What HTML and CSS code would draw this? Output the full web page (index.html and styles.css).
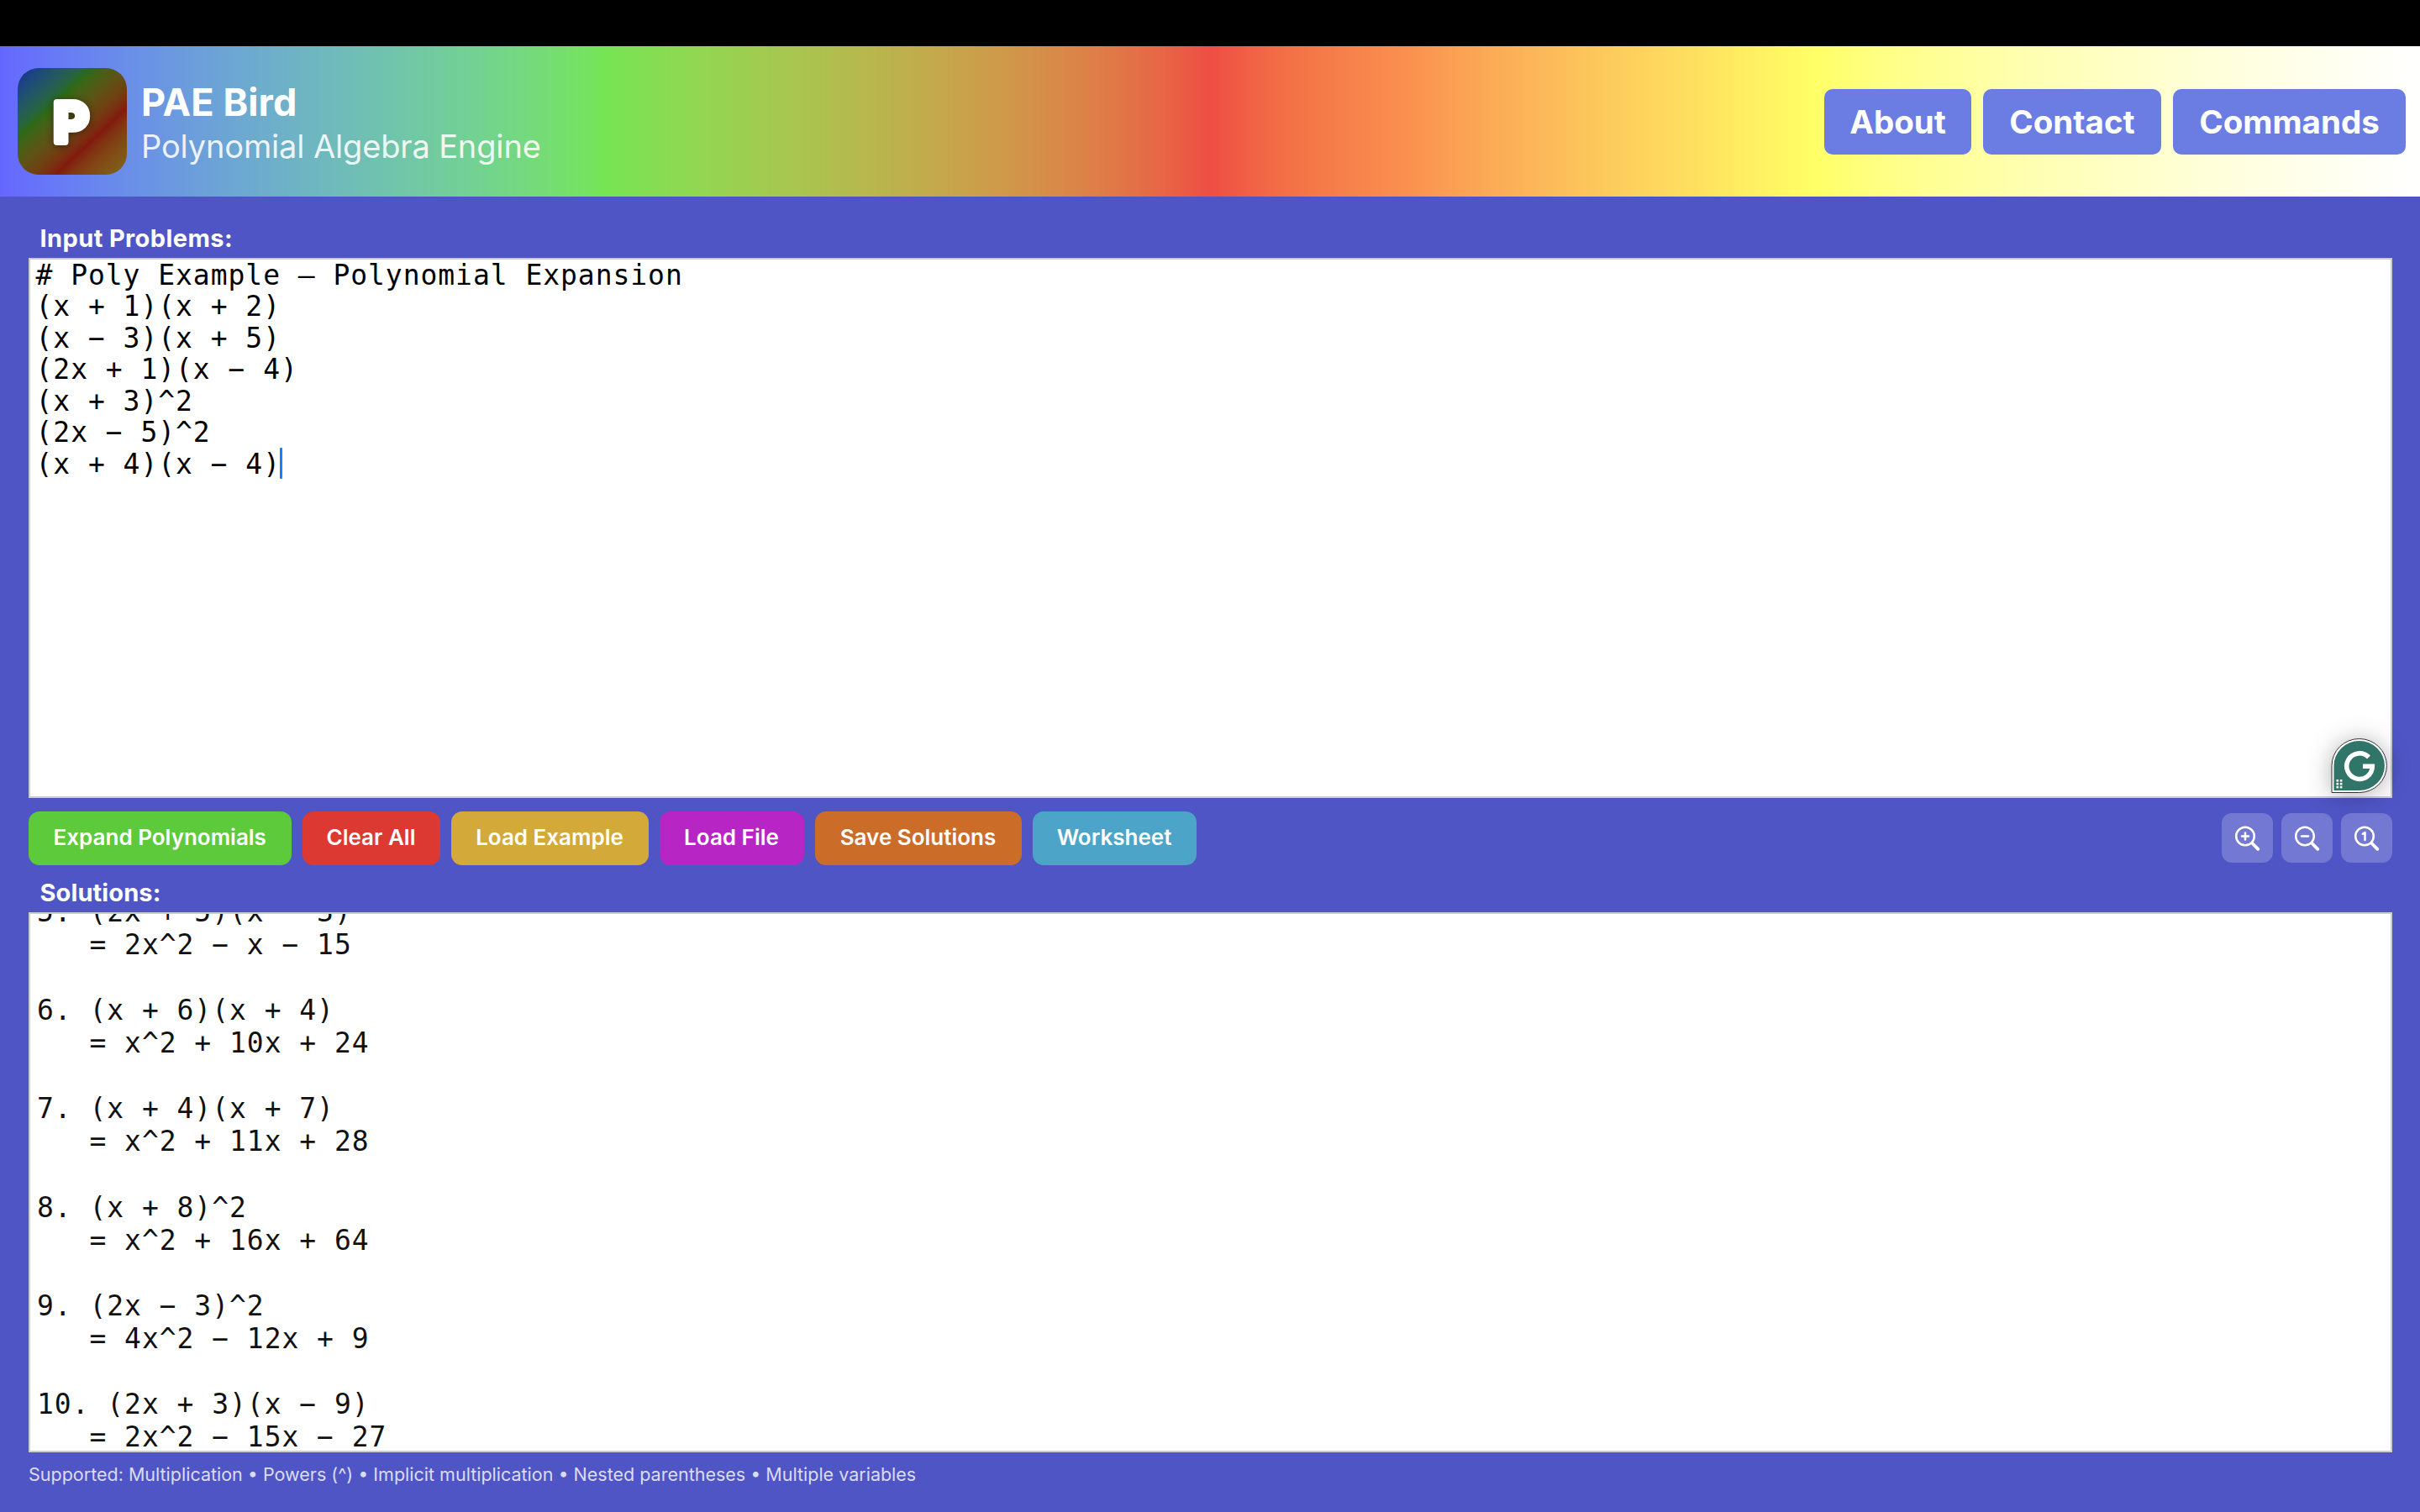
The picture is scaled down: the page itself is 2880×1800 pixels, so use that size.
FILE: index.html
```html
<!DOCTYPE html>
<html lang="en">
<head>
<meta charset="utf-8">
<title>PAE Bird</title>
<link rel="stylesheet" href="styles.css">
</head>
<body>
<div class="notch"></div>
<header class="header">
  <div class="logo"><svg width="130" height="127" viewBox="0 0 130 127"><text class="logo-letter" x="42.500" y="88.200">P</text></svg></div>
  <div class="brand">
    <h1 class="title">PAE Bird</h1>
    <p class="subtitle">Polynomial Algebra Engine</p>
  </div>
  <nav class="nav">
    <a class="nav-btn nav-about">About</a>
    <a class="nav-btn nav-contact">Contact</a>
    <a class="nav-btn nav-commands">Commands</a>
  </nav>
</header>
<main class="main">
  <h2 class="label label-input">Input Problems:</h2>
  <section class="pane pane-input">
<pre class="code code-input"># Poly Example — Polynomial Expansion
(x + 1)(x + 2)
(x − 3)(x + 5)
(2x + 1)(x − 4)
(x + 3)^2
(2x − 5)^2
(x + 4)(x − 4)<i class="caret"></i></pre>
    <svg class="badge" width="160" height="150" viewBox="0 0 160 150">
      <path class="badge-rim" d="M55 104.500V72.500A32.700 32 0 1 1 87.700 104.500Z"/>
      <path class="badge-fill" d="M57.500 102V72.500A30.200 29.500 0 1 1 87.700 102Z"/>
      <path class="badge-g" d="M99 62.500A15.300 15.300 0 1 0 103.300 73.200H92"/>
      <g fill="#fff"><rect x="60.500" y="89" width="2.600" height="2.600"/><rect x="64.800" y="89" width="2.600" height="2.600"/><rect x="60.500" y="92.900" width="2.600" height="2.600"/><rect x="64.800" y="92.900" width="2.600" height="2.600"/><rect x="60.500" y="96.800" width="2.600" height="2.600"/><rect x="64.800" y="96.800" width="2.600" height="2.600"/></g>
    </svg>
  </section>
  <div class="toolbar">
    <button class="btn btn-expand">Expand Polynomials</button>
    <button class="btn btn-clear">Clear All</button>
    <button class="btn btn-example">Load Example</button>
    <button class="btn btn-file">Load File</button>
    <button class="btn btn-save">Save Solutions</button>
    <button class="btn btn-sheet">Worksheet</button>
    <div class="zooms">
      <button class="zoom-btn"><svg width="61" height="59" viewBox="0 0 61 59"><circle cx="28" cy="27.500" r="10.800"/><path d="M28 23.500v8M24 27.500h8"/><path class="handle" d="M36.500 36L43.300 42.800"/></svg></button>
      <button class="zoom-btn"><svg width="61" height="59" viewBox="0 0 61 59"><circle cx="28" cy="27.500" r="10.800"/><path d="M24 27.500h8"/><path class="handle" d="M36.500 36L43.300 42.800"/></svg></button>
      <button class="zoom-btn"><svg width="61" height="59" viewBox="0 0 61 59"><circle cx="28" cy="27.500" r="10.800"/><path d="M25.800 24.800L28.500 23V32"/><path class="handle" d="M36.500 36L43.300 42.800"/></svg></button>
    </div>
  </div>
  <h2 class="label label-solutions">Solutions:</h2>
  <section class="pane pane-solutions">
<pre class="code code-solutions">5. (2x + 5)(x − 3)
   = 2x^2 − x − 15

6. (x + 6)(x + 4)
   = x^2 + 10x + 24

7. (x + 4)(x + 7)
   = x^2 + 11x + 28

8. (x + 8)^2
   = x^2 + 16x + 64

9. (2x − 3)^2
   = 4x^2 − 12x + 9

10. (2x + 3)(x − 9)
   = 2x^2 − 15x − 27</pre>
  </section>
  <p class="footer">Supported: Multiplication • Powers (^) • Implicit multiplication • Nested parentheses • Multiple variables</p>
</main>
</body>
</html>
```
FILE: styles.css
```css
* { box-sizing: border-box; margin: 0; padding: 0; }
body {
  width: 2880px; height: 1800px; overflow: hidden;
  display: flex; flex-direction: column;
  background: #4f55c5; color: #fff;
  font-family: Inter, "Liberation Sans", sans-serif;
}
.notch { height: 55px; background: #000; }
.header {
  height: 179px; padding: 0 17px 0 21px;
  display: flex; align-items: center;
  background: linear-gradient(90deg in srgb-linear, #6666ff 0%, #76e554 25%, #ee4d44 50%, #f37347 53.6%, #fa8f4f 58%, #fcba5a 64%, #fee05f 70%, #ffff66 75%, #ffffff 100%);
}
.logo {
  width: 130px; height: 127px; border-radius: 25px; overflow: hidden;
  background: linear-gradient(137deg in srgb-linear, #142a96 0%, #2a6a18 33%, #82190f 68%, #80661c 100%);
}
.logo svg { display: block; }
.logo-letter {
  font-size: 65px; font-weight: 700; fill: #fff;
  stroke: #fff; stroke-width: 8px; stroke-linejoin: round;
  filter: drop-shadow(0 1px 4px rgba(0, 0, 0, .45));
}
.brand { margin-left: 17px; padding-top: 8px; }
.title { font-size: 45px; line-height: 50px; font-weight: 700; letter-spacing: .1px; white-space: nowrap; }
.subtitle { font-size: 38px; line-height: 54px; font-weight: 400; color: rgba(255, 255, 255, .88); white-space: nowrap; letter-spacing: -.150px; }
.nav { margin-left: auto; display: flex; gap: 14px; }
.nav-btn {
  height: 78px; border-radius: 10px; background: #6b7de3;
  font-size: 38.500px; line-height: 78px; font-weight: 700; text-align: center;
}
.nav-about { width: 175px; }
.nav-contact { width: 212px; }
.nav-commands { width: 277px; }
.main { flex: 1; padding: 0 33px 0 34px; display: flex; flex-direction: column; }
.label { padding-left: 13.500px; font-size: 29px; font-weight: 700; letter-spacing: .4px; white-space: nowrap; }
.label-input { height: 73px; line-height: 100px; }
.pane { position: relative; background: #fff; border: 2px solid #ccc; }
.pane-input { height: 643px; }
.code { font-family: "DejaVu Sans Mono", "Liberation Mono", monospace; font-size: 33px; letter-spacing: .95px; color: #000; }
.code-input { padding: 0 6.500px; line-height: 37.400px; }
.caret { display: inline-block; width: 3px; height: 37px; margin-left: -1px; vertical-align: -6px; background: #1a7bff; border-radius: 1px; }
.badge { position: absolute; right: -35px; bottom: -41px; filter: drop-shadow(0 2px 14px rgba(0, 0, 0, .3)); }
.badge-rim { fill: #fff; stroke: #333; stroke-width: 1; }
.badge-fill { fill: #317568; }
.badge-g { fill: none; stroke: #fff; stroke-width: 5.500; }
.toolbar { height: 80px; margin-top: 16px; display: flex; align-items: flex-start; gap: 13px; }
.btn {
  height: 64px; padding-bottom: 2px; border: 0; border-radius: 13px; color: #fff;
  font: 600 26px/62px Inter, sans-serif; white-space: nowrap; text-align: center;
}
.btn-expand { width: 312.500px; background: #5dca3b; }
.btn-clear { width: 164px; background: #db3931; }
.btn-example { width: 235px; background: #d3aa3a; }
.btn-file { width: 172px; background: #b825c5; }
.btn-save { width: 246px; background: #cb6c29; }
.btn-sheet { width: 195px; background: #4ca5c8; }
.zooms { margin-left: auto; margin-top: 2px; display: flex; gap: 10px; }
.zoom-btn { width: 61px; height: 59px; border: 0; border-radius: 12px; background: #7378d2; }
.zoom-btn svg { display: block; fill: none; stroke: #fff; stroke-width: 2.500; stroke-linecap: round; stroke-linejoin: round; }
.zoom-btn .handle { stroke-width: 3.800; }
.label-solutions { height: 40px; line-height: 34px; letter-spacing: .1px; }
.pane-solutions { height: 643px; overflow: hidden; }
.code-solutions { margin-top: -22px; padding: 0 8px; line-height: 39.070px; color: #111; }
.footer { font-size: 21.500px; line-height: 52px; color: #dadcf5; white-space: nowrap; }
```
